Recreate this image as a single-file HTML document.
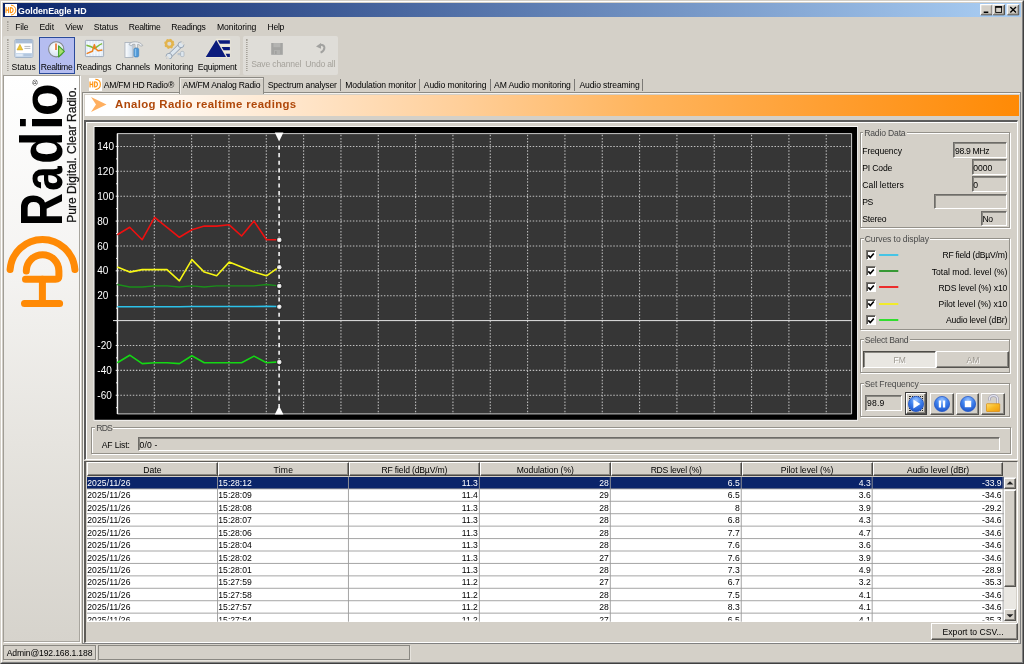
<!DOCTYPE html>
<html><head><meta charset="utf-8"><title>GoldenEagle HD</title>
<style>
*{box-sizing:border-box;margin:0;padding:0}
html,body{width:1024px;height:664px;overflow:hidden;background:#d4d0c8}
body{font-family:"Liberation Sans",sans-serif;font-size:8.6px;color:#000;position:relative}
#w{position:absolute;left:0;top:0;width:1024px;height:664px;will-change:transform}
.a{position:absolute}
.t{position:absolute;white-space:nowrap;line-height:13px;height:13px}
.cb{top:5px;width:12px;height:11px;background:#d4d0c8;border:1px solid;border-color:#fff #404040 #404040 #fff;box-shadow:inset -1px -1px 0 #808080}
.grip{width:2px;border-left:1px dotted #a09c94;border-right:1px dotted #b8b4ac;opacity:.9}
.grp{position:absolute;border:1px solid #94918a;box-shadow:1px 1px 0 #fff,inset 1px 1px 0 #fff}
.fld{position:absolute;border:1px solid;border-color:#6e6c68 #fff #fff #6e6c68;box-shadow:inset 1px 1px 0 #8a8882}
.btn{position:absolute;border:1px solid;border-color:#fff #55534f #55534f #fff;box-shadow:inset -1px -1px 0 #8a8882;background:#d4d0c8}
.chk{position:absolute;width:10px;height:10px;background:#fff;border:1px solid;border-color:#77746f #fff #fff #77746f;box-shadow:inset 1px 1px 0 #55534f}
</style></head><body>
<div id="w"><div class="a" style="left:0;top:0;width:1024px;height:664px;border:1px solid;border-color:#d4d0c8 #404040 #404040 #d4d0c8"></div>
<div class="a" style="left:1px;top:1px;width:1022px;height:662px;border:1px solid;border-color:#fff #808080 #808080 #fff"></div>
<div class="a" style="left:3px;top:3px;width:1018px;height:14px;background:linear-gradient(90deg,#0a246a 0%,#a6caf0 97%,#a6caf0 100%)"></div>
<div class="a" style="left:5px;top:4px;width:12px;height:12px;background:#fff"></div>
<svg class="a" style="left:5px;top:4px" width="12" height="12" viewBox="0 0 12 12"><g fill="none" stroke="#ff9410" stroke-linecap="round"><path d="M1 3.6V8.6M1 6.1H3.6M3.6 3.6V8.6" stroke-width="1.1"/><path d="M5.4 3.6V8.6M5.4 3.6C9 3.4 9 8.8 5.4 8.6" stroke-width="1.1"/><path d="M6.4 1.2C12.4 1.6 12.4 10.6 6.4 11" stroke-width="1"/></g></svg>
<div class="t" style="top:4.65px;font-size:8.8px;letter-spacing:-0.037px;left:18.10px;color:#fff;font-weight:bold;">GoldenEagle HD</div>
<svg class="a" style="left:978px;top:3px" width="44" height="14" viewBox="978 3 44 14">
<g transform="translate(0 0)"><rect x="980.7" y="4.7" width="11.7" height="10.3" fill="#d4d0c8"/><path d="M980.7 15V4.7H992.4" fill="none" stroke="#fff" stroke-width="1.2"/><path d="M992.2 4.9V14.8H980.9" fill="none" stroke="#4a4844" stroke-width="1"/><path d="M991.3 5.8V13.9H981.8" fill="none" stroke="#8a8882" stroke-width="0.8"/></g><g transform="translate(12.2 0)"><rect x="980.7" y="4.7" width="11.7" height="10.3" fill="#d4d0c8"/><path d="M980.7 15V4.7H992.4" fill="none" stroke="#fff" stroke-width="1.2"/><path d="M992.2 4.9V14.8H980.9" fill="none" stroke="#4a4844" stroke-width="1"/><path d="M991.3 5.8V13.9H981.8" fill="none" stroke="#8a8882" stroke-width="0.8"/></g><g transform="translate(26.5 0)"><rect x="980.7" y="4.7" width="11.7" height="10.3" fill="#d4d0c8"/><path d="M980.7 15V4.7H992.4" fill="none" stroke="#fff" stroke-width="1.2"/><path d="M992.2 4.9V14.8H980.9" fill="none" stroke="#4a4844" stroke-width="1"/><path d="M991.3 5.8V13.9H981.8" fill="none" stroke="#8a8882" stroke-width="0.8"/></g>
<rect x="983.7" y="11.5" width="4.6" height="1.5" fill="#000"/>
<rect x="995.7" y="7" width="5.9" height="5.4" fill="none" stroke="#000" stroke-width="0.9"/><rect x="995.2" y="6.1" width="6.9" height="1.5" fill="#000"/>
<path d="M1010.3 7L1016 12.5M1016 7L1010.3 12.5" stroke="#000" stroke-width="1.35" fill="none"/>
</svg>
<div class="a grip" style="left:7px;top:21px;height:10px"></div>
<div class="t" style="top:21.22px;font-size:8.6px;letter-spacing:-0.190px;left:15.30px;">File</div>
<div class="t" style="top:21.22px;font-size:8.6px;letter-spacing:-0.053px;left:39.45px;">Edit</div>
<div class="t" style="top:21.22px;font-size:8.6px;letter-spacing:-0.246px;left:65.30px;">View</div>
<div class="t" style="top:21.22px;font-size:8.6px;letter-spacing:-0.004px;left:93.70px;">Status</div>
<div class="t" style="top:21.22px;font-size:8.6px;letter-spacing:-0.259px;left:128.70px;">Realtime</div>
<div class="t" style="top:21.22px;font-size:8.6px;letter-spacing:-0.245px;left:171.20px;">Readings</div>
<div class="t" style="top:21.22px;font-size:8.6px;letter-spacing:-0.077px;left:216.95px;">Monitoring</div>
<div class="t" style="top:21.22px;font-size:8.6px;letter-spacing:-0.309px;left:267.60px;">Help</div>
<div class="a" style="left:3px;top:36px;width:237px;height:39px;background:#dddbd5;border-radius:2px"></div>
<div class="a" style="left:243px;top:36px;width:95px;height:39px;background:#dfddd8;border-radius:2px"></div>
<div class="a grip" style="left:7px;top:39px;height:32px"></div>
<div class="a grip" style="left:246px;top:39px;height:32px"></div>
<div class="a" style="left:39px;top:37px;width:36px;height:37px;background:#b5bdf0;border:1px solid #2a4a9a"></div>
<div class="t" style="top:61.12px;font-size:8.6px;letter-spacing:-0.012px;left:11.60px;">Status</div>
<div class="t" style="top:61.12px;font-size:8.6px;letter-spacing:-0.259px;left:40.70px;">Realtime</div>
<div class="t" style="top:61.12px;font-size:8.6px;letter-spacing:-0.202px;left:76.60px;">Readings</div>
<div class="t" style="top:61.12px;font-size:8.6px;letter-spacing:-0.245px;left:115.45px;">Channels</div>
<div class="t" style="top:61.12px;font-size:8.6px;letter-spacing:-0.102px;left:154.20px;">Monitoring</div>
<div class="t" style="top:61.12px;font-size:8.6px;letter-spacing:-0.233px;left:197.70px;">Equipment</div>
<div class="t" style="top:57.62px;font-size:8.6px;letter-spacing:-0.166px;left:251.20px;color:#a5a29b;">Save channel</div>
<div class="t" style="top:57.62px;font-size:8.6px;letter-spacing:-0.191px;left:305.30px;color:#a5a29b;">Undo all</div>
<div class="a" style="left:3px;top:75px;width:77px;height:567px;border:1px solid;border-color:#a09d96 #a8a59e #a8a59e #a09d96;box-shadow:1px 1px 0 #fff;background:linear-gradient(180deg,#fff 0%,#f4f3f1 35%,#e6e4df 65%,#d6d3cc 100%)"></div>
<svg class="a" style="left:4px;top:76px" width="76" height="240" viewBox="4 76 76 240">
<g fill="none" stroke="#ff8a05" stroke-width="7" stroke-linecap="round">
<path d="M10.1 269.5A32.5 32.5 0 0 1 74.9 269.5"/>
<path d="M26.3 271A16.3 16.3 0 0 1 58.9 271V276Q58.9 279.3 55.5 279.3H25.5"/>
<path d="M42.4 279.3V303.4M24.5 303.4H59.6"/>
</g>
<text transform="translate(62.40 226.06) rotate(-90) scale(0.9140 1.1840)" font-family="Liberation Sans, sans-serif" font-weight="bold" font-size="50" fill="#000">R</text>
<text transform="translate(62.10 190.80) rotate(-90) scale(0.8780 1.1140)" font-family="Liberation Sans, sans-serif" font-weight="bold" font-size="50" fill="#000">a</text>
<text transform="translate(62.10 164.00) rotate(-90) scale(1.0600 1.1980)" font-family="Liberation Sans, sans-serif" font-weight="bold" font-size="50" fill="#000">d</text>
<text transform="translate(62.40 129.90) rotate(-90) scale(1.0640 1.1400)" font-family="Liberation Sans, sans-serif" font-weight="bold" font-size="50" fill="#000">i</text>
<text transform="translate(62.10 116.00) rotate(-90) scale(1.0660 1.1140)" font-family="Liberation Sans, sans-serif" font-weight="bold" font-size="50" fill="#000">o</text>
<text transform="translate(75.8 222.8) rotate(-90)" font-family="Liberation Sans, sans-serif" font-size="12.6" textLength="135.6" lengthAdjust="spacingAndGlyphs" fill="#111" stroke="#111" stroke-width="0.25">Pure Digital. Clear Radio.</text>
<text transform="translate(37.8 85.6) rotate(-90)" font-family="Liberation Sans, sans-serif" font-size="8" fill="#222">&#174;</text>
</svg>
<div class="a" style="left:3px;top:645px;width:93px;height:15px;border:1px solid #8a8882;box-shadow:1px 1px 0 #e6e3dd"></div>
<div class="a" style="left:98px;top:645px;width:312px;height:15px;border:1px solid #8a8882;box-shadow:1px 1px 0 #e6e3dd"></div>
<div class="t" style="top:647.42px;font-size:8.6px;letter-spacing:-0.129px;left:6.70px;">Admin@192.168.1.188</div>
<div class="a" style="left:82px;top:92px;width:939px;height:552px;border:1px solid;border-color:#8c8a84 #808080 #808080 #8c8a84;box-shadow:inset 1px 1px 0 #f4f2ee"></div>
<div class="a" style="left:179px;top:77px;width:85px;height:17px;background:#d4d0c8;border:1px solid #8c8a84;border-bottom:none;box-shadow:inset 1px 1px 0 #ece9e4"></div>
<div class="a" style="left:89px;top:78px;width:12.5px;height:12.5px;background:#fff"></div>
<svg class="a" style="left:89px;top:78px" width="12.5" height="12.5" viewBox="0 0 12 12"><g fill="none" stroke="#ff9410" stroke-linecap="round"><path d="M1 3.6V8.6M1 6.1H3.6M3.6 3.6V8.6" stroke-width="1.1"/><path d="M5.4 3.6V8.6M5.4 3.6C9 3.4 9 8.8 5.4 8.6" stroke-width="1.1"/><path d="M6.4 1.2C12.4 1.6 12.4 10.6 6.4 11" stroke-width="1"/></g></svg>
<div class="t" style="top:78.82px;font-size:8.6px;letter-spacing:-0.221px;left:103.70px;">AM/FM HD Radio&#174;</div>
<div class="t" style="top:78.82px;font-size:8.6px;letter-spacing:-0.206px;left:182.80px;">AM/FM Analog Radio</div>
<div class="t" style="top:78.82px;font-size:8.6px;letter-spacing:-0.156px;left:267.80px;">Spectrum analyser</div>
<div class="t" style="top:78.82px;font-size:8.6px;letter-spacing:-0.139px;left:345.30px;">Modulation monitor</div>
<div class="t" style="top:78.82px;font-size:8.6px;letter-spacing:-0.125px;left:423.80px;">Audio monitoring</div>
<div class="t" style="top:78.82px;font-size:8.6px;letter-spacing:-0.142px;left:494.10px;">AM Audio monitoring</div>
<div class="t" style="top:78.82px;font-size:8.6px;letter-spacing:-0.124px;left:579.45px;">Audio streaming</div>
<div class="a" style="left:340px;top:78.5px;width:1px;height:12.5px;background:#7c7a76"></div>
<div class="a" style="left:419px;top:78.5px;width:1px;height:12.5px;background:#7c7a76"></div>
<div class="a" style="left:489.5px;top:78.5px;width:1px;height:12.5px;background:#7c7a76"></div>
<div class="a" style="left:574px;top:78.5px;width:1px;height:12.5px;background:#7c7a76"></div>
<div class="a" style="left:642px;top:78.5px;width:1px;height:12.5px;background:#7c7a76"></div>
<div class="a" style="left:85px;top:95px;width:934px;height:21px;background:linear-gradient(90deg,#fff 0%,#fff 4%,#ffe9d2 20%,#ffcf9a 40%,#ffb45c 60%,#ff9e30 80%,#ff8a05 100%)"></div>
<svg class="a" style="left:91px;top:97px" width="16" height="16" viewBox="0 0 16 16"><path d="M0 0L15.5 7.5L0 15L5 7.5Z" fill="#ffaf5f"/></svg>
<div class="t" style="top:97.85px;font-size:11.4px;letter-spacing:0.350px;left:115.10px;color:#b0480a;font-weight:bold;">Analog Radio realtime readings</div>
<div class="a" style="left:84px;top:120px;width:934px;height:340px;border:2px solid;border-color:#5c5c5c #fff #fff #5c5c5c;border-right-width:1px;border-bottom-width:1px;box-shadow:inset 1px 1px 0 #fff"></div>
<svg class="a" style="left:93px;top:126px" width="766" height="296" viewBox="93 126 766 296"><rect x="93.6" y="126.2" width="764.4" height="294.4" fill="#fff"/><rect x="94.5" y="127" width="762.6" height="292.8" fill="#000"/><rect x="117.3" y="133.6" width="734.3000000000001" height="280.29999999999995" fill="#363636"/><path d="M154.30 134.8V413.9M191.63 134.8V413.9M228.96 134.8V413.9M266.29 134.8V413.9M303.62 134.8V413.9M340.95 134.8V413.9M378.28 134.8V413.9M415.61 134.8V413.9M452.94 134.8V413.9M490.27 134.8V413.9M527.60 134.8V413.9M564.93 134.8V413.9M602.26 134.8V413.9M639.59 134.8V413.9M676.92 134.8V413.9M714.25 134.8V413.9M751.58 134.8V413.9M788.91 134.8V413.9M826.24 134.8V413.9M117.3 395.24H850.6M117.3 370.36H850.6M117.3 345.48H850.6M117.3 295.72H850.6M117.3 270.84H850.6M117.3 245.96H850.6M117.3 221.08H850.6M117.3 196.20H850.6M117.3 171.32H850.6M117.3 146.44H850.6" stroke="#c0c0c0" stroke-width="1.05" stroke-dasharray="1.5 1.6" fill="none"/><path d="M117.3 133.6H851.6V413.9H117.3Z" stroke="#dcdcdc" stroke-width="0.9" fill="none"/><path d="M117.5 133.6V413.9" stroke="#f4f4f4" stroke-width="1.3" fill="none"/><path d="M116.0 407.68h1.6M115.7 395.24h2M116.0 382.80h1.6M115.7 370.36h2M116.0 357.92h1.6M115.7 345.48h2M116.0 333.04h1.6M115.7 320.60h2M116.0 308.16h1.6M115.7 295.72h2M116.0 283.28h1.6M115.7 270.84h2M116.0 258.40h1.6M115.7 245.96h2M116.0 233.52h1.6M115.7 221.08h2M116.0 208.64h1.6M115.7 196.20h2M116.0 183.76h1.6M115.7 171.32h2M116.0 158.88h1.6M115.7 146.44h2" stroke="#f0f0f0" stroke-width="1" fill="none"/><path d="M113 320.60H851.6" stroke="#e4e4e4" stroke-width="1" fill="none"/><text x="97.3" y="398.84" font-family="Liberation Sans, sans-serif" font-size="10" fill="#fff">-60</text><text x="97.3" y="373.96" font-family="Liberation Sans, sans-serif" font-size="10" fill="#fff">-40</text><text x="97.3" y="349.08" font-family="Liberation Sans, sans-serif" font-size="10" fill="#fff">-20</text><text x="97.3" y="299.32" font-family="Liberation Sans, sans-serif" font-size="10" fill="#fff">20</text><text x="97.3" y="274.44" font-family="Liberation Sans, sans-serif" font-size="10" fill="#fff">40</text><text x="97.3" y="249.56" font-family="Liberation Sans, sans-serif" font-size="10" fill="#fff">60</text><text x="97.3" y="224.68" font-family="Liberation Sans, sans-serif" font-size="10" fill="#fff">80</text><text x="97.3" y="199.80" font-family="Liberation Sans, sans-serif" font-size="10" fill="#fff">100</text><text x="97.3" y="174.92" font-family="Liberation Sans, sans-serif" font-size="10" fill="#fff">120</text><text x="97.3" y="150.04" font-family="Liberation Sans, sans-serif" font-size="10" fill="#fff">140</text><path d="M117.3 306.7L129.7 306.7L142.2 306.7L154.6 306.7L167.0 306.7L179.4 306.7L191.9 306.5L204.3 306.5L216.7 306.5L229.2 306.5L241.6 306.5L254.0 306.5L266.5 306.4L278.9 306.5" stroke="#2cc2ea" stroke-width="1.6" stroke-linejoin="round" fill="none"/><path d="M117.3 284.5L129.7 287.0L142.2 287.0L154.6 285.8L167.0 285.8L179.4 287.0L191.9 285.8L204.3 287.0L216.7 285.8L229.2 285.8L241.6 285.8L254.0 285.8L266.5 284.5L278.9 285.8" stroke="#1a8f1a" stroke-width="1.3" stroke-linejoin="round" fill="none"/><path d="M117.3 234.8L129.7 227.3L142.2 239.7L154.6 217.3L167.0 227.3L179.4 237.3L191.9 229.8L204.3 226.1L216.7 226.1L229.2 224.8L241.6 236.0L254.0 221.1L266.5 239.7L278.9 239.7" stroke="#ee1010" stroke-width="1.6" stroke-linejoin="round" fill="none"/><path d="M117.3 267.1L129.7 272.1L142.2 269.6L154.6 269.6L167.0 269.6L179.4 280.8L191.9 259.6L204.3 272.1L216.7 275.8L229.2 262.1L241.6 267.1L254.0 272.1L266.5 275.8L278.9 267.1" stroke="#f6f614" stroke-width="1.6" stroke-linejoin="round" fill="none"/><path d="M117.3 362.8L129.7 355.2L142.2 363.6L154.6 362.8L167.0 362.8L179.4 363.6L191.9 355.7L204.3 362.8L216.7 362.8L229.2 362.8L241.6 362.8L254.0 356.1L266.5 362.8L278.9 361.9" stroke="#14d814" stroke-width="1.6" stroke-linejoin="round" fill="none"/><path d="M279.1 145.5V406.9" stroke="#fff" stroke-width="1.5" stroke-dasharray="4.1 3.5" fill="none"/><path d="M274.8 132.6h8.6l-4.3 8.8z" fill="#fff"/><path d="M274.8 414.5h8.6l-4.3 -8.8z" fill="#fff"/><circle cx="279.3" cy="306.7" r="2.9" fill="#1c1c1c"/><circle cx="279.3" cy="306.7" r="2.3" fill="#dedede"/><circle cx="279.3" cy="306.7" r="1.1" fill="#fff"/><circle cx="279.3" cy="286.0" r="2.9" fill="#1c1c1c"/><circle cx="279.3" cy="286.0" r="2.3" fill="#dedede"/><circle cx="279.3" cy="286.0" r="1.1" fill="#fff"/><circle cx="279.3" cy="239.9" r="2.9" fill="#1c1c1c"/><circle cx="279.3" cy="239.9" r="2.3" fill="#dedede"/><circle cx="279.3" cy="239.9" r="1.1" fill="#fff"/><circle cx="279.3" cy="267.3" r="2.9" fill="#1c1c1c"/><circle cx="279.3" cy="267.3" r="2.3" fill="#dedede"/><circle cx="279.3" cy="267.3" r="1.1" fill="#fff"/><circle cx="279.3" cy="362.1" r="2.9" fill="#1c1c1c"/><circle cx="279.3" cy="362.1" r="2.3" fill="#dedede"/><circle cx="279.3" cy="362.1" r="1.1" fill="#fff"/></svg>
<div class="grp" style="left:860.0px;top:132.0px;width:150.0px;height:95.5px"></div>
<div class="a" style="left:863.0px;top:131.0px;width:43.7px;height:4px;background:#d4d0c8"></div>
<div class="t" style="top:127.32px;font-size:8.6px;letter-spacing:-0.170px;left:864.20px;color:#4a4a4a;">Radio Data</div>
<div class="t" style="top:144.52px;font-size:8.6px;letter-spacing:-0.112px;left:862.30px;">Frequency</div>
<div class="fld" style="left:953.0px;top:142.0px;width:54.3px;height:15.5px"></div>
<div class="t" style="top:144.52px;font-size:8.6px;letter-spacing:-0.323px;left:955.00px;">98.9 MHz</div>
<div class="t" style="top:161.72px;font-size:8.6px;letter-spacing:-0.180px;left:862.30px;">PI Code</div>
<div class="fld" style="left:971.5px;top:159.3px;width:35.8px;height:15.5px"></div>
<div class="t" style="top:161.72px;font-size:8.6px;letter-spacing:-0.056px;left:973.30px;">0000</div>
<div class="t" style="top:178.92px;font-size:8.6px;letter-spacing:0.076px;left:862.30px;">Call letters</div>
<div class="fld" style="left:971.5px;top:176.4px;width:35.8px;height:15.5px"></div>
<div class="t" style="top:178.92px;font-size:8.6px;letter-spacing:0.219px;left:973.30px;">0</div>
<div class="t" style="top:196.12px;font-size:8.6px;letter-spacing:-0.634px;left:862.30px;">PS</div>
<div class="fld" style="left:934.3px;top:193.5px;width:73.0px;height:15.5px"></div>
<div class="t" style="top:213.32px;font-size:8.6px;letter-spacing:-0.221px;left:862.30px;">Stereo</div>
<div class="fld" style="left:980.5px;top:210.6px;width:26.8px;height:15.5px"></div>
<div class="t" style="top:213.32px;font-size:8.6px;letter-spacing:-0.500px;left:982.60px;">No</div>
<div class="grp" style="left:860.0px;top:237.5px;width:150.0px;height:92.8px"></div>
<div class="a" style="left:863.5px;top:236.5px;width:66.6px;height:4px;background:#d4d0c8"></div>
<div class="t" style="top:232.62px;font-size:8.6px;letter-spacing:-0.101px;left:864.70px;color:#4a4a4a;">Curves to display</div>
<div class="chk" style="left:866px;top:249.9px"></div>
<svg class="a" style="left:867px;top:251.7px" width="8" height="8" viewBox="0 0 8 8"><path d="M1.3 3.4L3.3 5.6L6.8 1.5" stroke="#000" stroke-width="1.6" fill="none"/></svg>
<svg class="a" style="left:878px;top:251.9px" width="22" height="6" viewBox="0 0 22 6"><path d="M1.1 3H20.3" stroke="#2cc2ea" stroke-width="1.7"/></svg>
<div class="t" style="top:249.42px;font-size:8.6px;letter-spacing:-0.210px;left:942.40px;">RF field (dB&#181;V/m)</div>
<div class="chk" style="left:866px;top:266.1px"></div>
<svg class="a" style="left:867px;top:267.9px" width="8" height="8" viewBox="0 0 8 8"><path d="M1.3 3.4L3.3 5.6L6.8 1.5" stroke="#000" stroke-width="1.6" fill="none"/></svg>
<svg class="a" style="left:878px;top:268.1px" width="22" height="6" viewBox="0 0 22 6"><path d="M1.1 3H20.3" stroke="#1a8f1a" stroke-width="1.7"/></svg>
<div class="t" style="top:265.67px;font-size:8.6px;letter-spacing:0.007px;left:931.70px;">Total mod. level (%)</div>
<div class="chk" style="left:866px;top:282.4px"></div>
<svg class="a" style="left:867px;top:284.2px" width="8" height="8" viewBox="0 0 8 8"><path d="M1.3 3.4L3.3 5.6L6.8 1.5" stroke="#000" stroke-width="1.6" fill="none"/></svg>
<svg class="a" style="left:878px;top:284.4px" width="22" height="6" viewBox="0 0 22 6"><path d="M1.1 3H20.3" stroke="#f01010" stroke-width="1.7"/></svg>
<div class="t" style="top:281.92px;font-size:8.6px;letter-spacing:-0.083px;left:938.50px;">RDS level (%) x10</div>
<div class="chk" style="left:866px;top:298.6px"></div>
<svg class="a" style="left:867px;top:300.4px" width="8" height="8" viewBox="0 0 8 8"><path d="M1.3 3.4L3.3 5.6L6.8 1.5" stroke="#000" stroke-width="1.6" fill="none"/></svg>
<svg class="a" style="left:878px;top:300.6px" width="22" height="6" viewBox="0 0 22 6"><path d="M1.1 3H20.3" stroke="#f6f010" stroke-width="1.7"/></svg>
<div class="t" style="top:298.17px;font-size:8.6px;letter-spacing:0.001px;left:938.50px;">Pilot level (%) x10</div>
<div class="chk" style="left:866px;top:314.9px"></div>
<svg class="a" style="left:867px;top:316.7px" width="8" height="8" viewBox="0 0 8 8"><path d="M1.3 3.4L3.3 5.6L6.8 1.5" stroke="#000" stroke-width="1.6" fill="none"/></svg>
<svg class="a" style="left:878px;top:316.9px" width="22" height="6" viewBox="0 0 22 6"><path d="M1.1 3H20.3" stroke="#14e014" stroke-width="1.7"/></svg>
<div class="t" style="top:314.42px;font-size:8.6px;letter-spacing:-0.131px;left:946.00px;">Audio level (dBr)</div>
<div class="grp" style="left:860.0px;top:339.0px;width:150.0px;height:34.0px"></div>
<div class="a" style="left:863.5px;top:338.0px;width:46.1px;height:4px;background:#d4d0c8"></div>
<div class="t" style="top:334.12px;font-size:8.6px;letter-spacing:-0.240px;left:864.70px;color:#4a4a4a;">Select Band</div>
<div class="a" style="left:863px;top:351.4px;width:72.5px;height:16.8px;background:#e9e7e2;border:1px solid;border-color:#4e4c48 #fff #fff #4e4c48;box-shadow:inset 1px 1px 0 #8a8882"></div>
<div class="btn" style="left:935.5px;top:351.4px;width:73px;height:16.8px"></div>
<div class="t" style="top:354.02px;font-size:8.6px;letter-spacing:0.000px;left:893.50px;color:#9c9890;text-shadow:0.8px 0.8px 0 #fff;">FM</div>
<div class="t" style="top:354.02px;font-size:8.6px;letter-spacing:0.000px;left:966.50px;color:#9c9890;text-shadow:0.8px 0.8px 0 #fff;">AM</div>
<div class="grp" style="left:860.0px;top:382.6px;width:150.0px;height:34.0px"></div>
<div class="a" style="left:863.5px;top:381.6px;width:56.3px;height:4px;background:#d4d0c8"></div>
<div class="t" style="top:377.52px;font-size:8.6px;letter-spacing:-0.153px;left:864.70px;color:#4a4a4a;">Set Frequency</div>
<div class="fld" style="left:865.4px;top:394.5px;width:36.4px;height:16.4px"></div>
<div class="t" style="top:397.12px;font-size:8.6px;letter-spacing:0.116px;left:867.10px;">98.9</div>
<div class="a" style="left:905.2px;top:391.5px;width:22.0px;height:23.6px;border:1px solid #3c3c3c"></div>
<div class="btn" style="left:906.2px;top:392.5px;width:20.0px;height:21.6px"></div>
<div class="a" style="left:909.2px;top:395.5px;width:14.0px;height:15.6px;border:1px dotted #222"></div>
<div class="btn" style="left:930.0px;top:392.5px;width:23.5px;height:22.2px"></div>
<div class="btn" style="left:956.0px;top:392.5px;width:23.2px;height:22.2px"></div>
<div class="btn" style="left:981.4px;top:392.5px;width:23.4px;height:22.2px"></div>
<svg class="a" style="left:907.3px;top:394.8px" width="18" height="18" viewBox="-9 -9 18 18"><defs><radialGradient id="bg916" cx="0.5" cy="0.25" r="0.8"><stop offset="0" stop-color="#9cc4ff"/><stop offset="0.45" stop-color="#3f82ee"/><stop offset="1" stop-color="#1a4fc4"/></radialGradient></defs><circle r="7.6" fill="url(#bg916)" stroke="#2a5cc8" stroke-width="0.8"/><path d="M-2.6 -4.4L4.4 0L-2.6 4.4Z" fill="#fff"/></svg>
<svg class="a" style="left:932.8px;top:394.8px" width="18" height="18" viewBox="-9 -9 18 18"><defs><radialGradient id="bg941" cx="0.5" cy="0.25" r="0.8"><stop offset="0" stop-color="#9cc4ff"/><stop offset="0.45" stop-color="#3f82ee"/><stop offset="1" stop-color="#1a4fc4"/></radialGradient></defs><circle r="7.6" fill="url(#bg941)" stroke="#2a5cc8" stroke-width="0.8"/><path d="M-3.2 -3.6h2.3v7.2h-2.3zM0.9 -3.6h2.3v7.2h-2.3z" fill="#fff"/></svg>
<svg class="a" style="left:958.5px;top:394.8px" width="18" height="18" viewBox="-9 -9 18 18"><defs><radialGradient id="bg967" cx="0.5" cy="0.25" r="0.8"><stop offset="0" stop-color="#9cc4ff"/><stop offset="0.45" stop-color="#3f82ee"/><stop offset="1" stop-color="#1a4fc4"/></radialGradient></defs><circle r="7.6" fill="url(#bg967)" stroke="#2a5cc8" stroke-width="0.8"/><rect x="-3.2" y="-3.2" width="6.4" height="6.4" fill="#fff"/></svg>
<svg class="a" style="left:985px;top:393px" width="17" height="20" viewBox="0 0 17 20"><defs><linearGradient id="lk" x1="0" y1="0" x2="1" y2="1"><stop offset="0" stop-color="#ffdf70"/><stop offset="0.5" stop-color="#f8b822"/><stop offset="1" stop-color="#f09a10"/></linearGradient></defs><path d="M4.4 7.6V6.4C4.4 1.4 12.6 1.4 12.6 6.4V10.8" fill="none" stroke="#9a9aae" stroke-width="2.6"/><path d="M4.4 7.6V6.4C4.4 1.4 12.6 1.4 12.6 6.4V10.8" fill="none" stroke="#e4e4ee" stroke-width="1.3"/><rect x="1.5" y="10.7" width="13.2" height="7.8" rx="0.6" fill="url(#lk)" stroke="#d88a0a" stroke-width="0.7"/></svg>
<div class="grp" style="left:91.3px;top:427.0px;width:919.7px;height:27.0px"></div>
<div class="a" style="left:95.1px;top:426.0px;width:18.0px;height:4px;background:#d4d0c8"></div>
<div class="t" style="top:421.82px;font-size:8.6px;letter-spacing:-0.800px;left:96.30px;color:#4a4a4a;">RDS</div>
<div class="t" style="top:439.02px;font-size:8.6px;letter-spacing:-0.130px;left:101.70px;">AF List:</div>
<div class="fld" style="left:138px;top:436.5px;width:862.4px;height:14.8px"></div>
<div class="t" style="top:439.02px;font-size:8.6px;letter-spacing:0.179px;left:139.50px;">0/0 -</div>
<div class="a" style="left:84px;top:461px;width:934px;height:181.5px;border:1px solid;border-color:#5e5c58 #fff #fff #5e5c58;border-left-width:2px"></div>
<div class="a" style="left:87px;top:476.5px;width:916.8px;height:145.2px;background:#fff"></div>
<div class="a" style="left:87.0px;top:462.3px;width:130.9px;height:14px;background:#d4d0c8;border:1px solid;border-color:#fff #4a4844 #4a4844 #fff;box-shadow:inset -1px -1px 0 #8a8882"></div>
<div class="a" style="left:217.9px;top:462.3px;width:130.9px;height:14px;background:#d4d0c8;border:1px solid;border-color:#fff #4a4844 #4a4844 #fff;box-shadow:inset -1px -1px 0 #8a8882"></div>
<div class="a" style="left:348.9px;top:462.3px;width:130.9px;height:14px;background:#d4d0c8;border:1px solid;border-color:#fff #4a4844 #4a4844 #fff;box-shadow:inset -1px -1px 0 #8a8882"></div>
<div class="a" style="left:479.8px;top:462.3px;width:130.9px;height:14px;background:#d4d0c8;border:1px solid;border-color:#fff #4a4844 #4a4844 #fff;box-shadow:inset -1px -1px 0 #8a8882"></div>
<div class="a" style="left:610.7px;top:462.3px;width:130.9px;height:14px;background:#d4d0c8;border:1px solid;border-color:#fff #4a4844 #4a4844 #fff;box-shadow:inset -1px -1px 0 #8a8882"></div>
<div class="a" style="left:741.7px;top:462.3px;width:130.9px;height:14px;background:#d4d0c8;border:1px solid;border-color:#fff #4a4844 #4a4844 #fff;box-shadow:inset -1px -1px 0 #8a8882"></div>
<div class="a" style="left:872.6px;top:462.3px;width:130.9px;height:14px;background:#d4d0c8;border:1px solid;border-color:#fff #4a4844 #4a4844 #fff;box-shadow:inset -1px -1px 0 #8a8882"></div>
<div class="t" style="top:463.92px;font-size:8.6px;letter-spacing:0.111px;left:143.16px;">Date</div>
<div class="t" style="top:463.92px;font-size:8.6px;letter-spacing:0.205px;left:273.59px;">Time</div>
<div class="t" style="top:463.92px;font-size:8.6px;letter-spacing:-0.169px;left:381.53px;">RF field (dB&#181;V/m)</div>
<div class="t" style="top:463.92px;font-size:8.6px;letter-spacing:-0.050px;left:516.71px;">Modulation (%)</div>
<div class="t" style="top:463.92px;font-size:8.6px;letter-spacing:-0.221px;left:650.64px;">RDS level (%)</div>
<div class="t" style="top:463.92px;font-size:8.6px;letter-spacing:0.004px;left:780.82px;">Pilot level (%)</div>
<div class="t" style="top:463.92px;font-size:8.6px;letter-spacing:-0.084px;left:907.00px;">Audio level (dBr)</div>
<div class="a" style="left:87px;top:476.6px;width:916.8px;height:12.2px;background:#0a246a"></div>
<svg class="a" style="left:86px;top:476px" width="919" height="146" viewBox="86 476 919 146"><path d="M87 488.85H1003.8M87 501.28H1003.8M87 513.71H1003.8M87 526.14H1003.8M87 538.57H1003.8M87 551.00H1003.8M87 563.43H1003.8M87 575.86H1003.8M87 588.29H1003.8M87 600.72H1003.8M87 613.15H1003.8M87 625.58H1003.8M217.53 476.5V621.7M348.46 476.5V621.7M479.39 476.5V621.7M610.32 476.5V621.7M741.25 476.5V621.7M872.18 476.5V621.7M1003.11 476.5V621.7" stroke="#9b9b9b" stroke-width="0.9" fill="none"/></svg>
<div class="t" style="top:476.92px;font-size:8.6px;letter-spacing:0.102px;left:87.20px;color:#fff;">2025/11/26</div>
<div class="t" style="top:476.92px;font-size:8.6px;letter-spacing:0.000px;left:218.33px;color:#fff;">15:28:12</div>
<div class="t" style="top:476.92px;font-size:8.6px;letter-spacing:0.000px;left:461.80px;color:#fff;">11.3</div>
<div class="t" style="top:476.92px;font-size:8.6px;letter-spacing:0.000px;left:599.26px;color:#fff;">28</div>
<div class="t" style="top:476.92px;font-size:8.6px;letter-spacing:0.000px;left:727.80px;color:#fff;">6.5</div>
<div class="t" style="top:476.92px;font-size:8.6px;letter-spacing:0.000px;left:858.73px;color:#fff;">4.3</div>
<div class="t" style="top:476.92px;font-size:8.6px;letter-spacing:0.000px;left:982.02px;color:#fff;">-33.9</div>
<div class="t" style="top:489.35px;font-size:8.6px;letter-spacing:0.102px;left:87.20px;">2025/11/26</div>
<div class="t" style="top:489.35px;font-size:8.6px;letter-spacing:0.000px;left:218.33px;">15:28:09</div>
<div class="t" style="top:489.35px;font-size:8.6px;letter-spacing:0.000px;left:461.80px;">11.4</div>
<div class="t" style="top:489.35px;font-size:8.6px;letter-spacing:0.000px;left:599.26px;">29</div>
<div class="t" style="top:489.35px;font-size:8.6px;letter-spacing:0.000px;left:727.80px;">6.5</div>
<div class="t" style="top:489.35px;font-size:8.6px;letter-spacing:0.000px;left:858.73px;">3.6</div>
<div class="t" style="top:489.35px;font-size:8.6px;letter-spacing:0.000px;left:982.02px;">-34.6</div>
<div class="t" style="top:501.78px;font-size:8.6px;letter-spacing:0.102px;left:87.20px;">2025/11/26</div>
<div class="t" style="top:501.78px;font-size:8.6px;letter-spacing:0.000px;left:218.33px;">15:28:08</div>
<div class="t" style="top:501.78px;font-size:8.6px;letter-spacing:0.000px;left:461.80px;">11.3</div>
<div class="t" style="top:501.78px;font-size:8.6px;letter-spacing:0.000px;left:599.26px;">28</div>
<div class="t" style="top:501.78px;font-size:8.6px;letter-spacing:0.000px;left:734.97px;">8</div>
<div class="t" style="top:501.78px;font-size:8.6px;letter-spacing:0.000px;left:858.73px;">3.9</div>
<div class="t" style="top:501.78px;font-size:8.6px;letter-spacing:0.000px;left:982.02px;">-29.2</div>
<div class="t" style="top:514.21px;font-size:8.6px;letter-spacing:0.102px;left:87.20px;">2025/11/26</div>
<div class="t" style="top:514.21px;font-size:8.6px;letter-spacing:0.000px;left:218.33px;">15:28:07</div>
<div class="t" style="top:514.21px;font-size:8.6px;letter-spacing:0.000px;left:461.80px;">11.3</div>
<div class="t" style="top:514.21px;font-size:8.6px;letter-spacing:0.000px;left:599.26px;">28</div>
<div class="t" style="top:514.21px;font-size:8.6px;letter-spacing:0.000px;left:727.80px;">6.8</div>
<div class="t" style="top:514.21px;font-size:8.6px;letter-spacing:0.000px;left:858.73px;">4.3</div>
<div class="t" style="top:514.21px;font-size:8.6px;letter-spacing:0.000px;left:982.02px;">-34.6</div>
<div class="t" style="top:526.64px;font-size:8.6px;letter-spacing:0.102px;left:87.20px;">2025/11/26</div>
<div class="t" style="top:526.64px;font-size:8.6px;letter-spacing:0.000px;left:218.33px;">15:28:06</div>
<div class="t" style="top:526.64px;font-size:8.6px;letter-spacing:0.000px;left:461.80px;">11.3</div>
<div class="t" style="top:526.64px;font-size:8.6px;letter-spacing:0.000px;left:599.26px;">28</div>
<div class="t" style="top:526.64px;font-size:8.6px;letter-spacing:0.000px;left:727.80px;">7.7</div>
<div class="t" style="top:526.64px;font-size:8.6px;letter-spacing:0.000px;left:858.73px;">4.7</div>
<div class="t" style="top:526.64px;font-size:8.6px;letter-spacing:0.000px;left:982.02px;">-34.6</div>
<div class="t" style="top:539.07px;font-size:8.6px;letter-spacing:0.102px;left:87.20px;">2025/11/26</div>
<div class="t" style="top:539.07px;font-size:8.6px;letter-spacing:0.000px;left:218.33px;">15:28:04</div>
<div class="t" style="top:539.07px;font-size:8.6px;letter-spacing:0.000px;left:461.80px;">11.3</div>
<div class="t" style="top:539.07px;font-size:8.6px;letter-spacing:0.000px;left:599.26px;">28</div>
<div class="t" style="top:539.07px;font-size:8.6px;letter-spacing:0.000px;left:727.80px;">7.6</div>
<div class="t" style="top:539.07px;font-size:8.6px;letter-spacing:0.000px;left:858.73px;">3.6</div>
<div class="t" style="top:539.07px;font-size:8.6px;letter-spacing:0.000px;left:982.02px;">-34.6</div>
<div class="t" style="top:551.50px;font-size:8.6px;letter-spacing:0.102px;left:87.20px;">2025/11/26</div>
<div class="t" style="top:551.50px;font-size:8.6px;letter-spacing:0.000px;left:218.33px;">15:28:02</div>
<div class="t" style="top:551.50px;font-size:8.6px;letter-spacing:0.000px;left:461.80px;">11.3</div>
<div class="t" style="top:551.50px;font-size:8.6px;letter-spacing:0.000px;left:599.26px;">27</div>
<div class="t" style="top:551.50px;font-size:8.6px;letter-spacing:0.000px;left:727.80px;">7.6</div>
<div class="t" style="top:551.50px;font-size:8.6px;letter-spacing:0.000px;left:858.73px;">3.9</div>
<div class="t" style="top:551.50px;font-size:8.6px;letter-spacing:0.000px;left:982.02px;">-34.6</div>
<div class="t" style="top:563.93px;font-size:8.6px;letter-spacing:0.102px;left:87.20px;">2025/11/26</div>
<div class="t" style="top:563.93px;font-size:8.6px;letter-spacing:0.000px;left:218.33px;">15:28:01</div>
<div class="t" style="top:563.93px;font-size:8.6px;letter-spacing:0.000px;left:461.80px;">11.3</div>
<div class="t" style="top:563.93px;font-size:8.6px;letter-spacing:0.000px;left:599.26px;">28</div>
<div class="t" style="top:563.93px;font-size:8.6px;letter-spacing:0.000px;left:727.80px;">7.3</div>
<div class="t" style="top:563.93px;font-size:8.6px;letter-spacing:0.000px;left:858.73px;">4.9</div>
<div class="t" style="top:563.93px;font-size:8.6px;letter-spacing:0.000px;left:982.02px;">-28.9</div>
<div class="t" style="top:576.36px;font-size:8.6px;letter-spacing:0.102px;left:87.20px;">2025/11/26</div>
<div class="t" style="top:576.36px;font-size:8.6px;letter-spacing:0.000px;left:218.33px;">15:27:59</div>
<div class="t" style="top:576.36px;font-size:8.6px;letter-spacing:0.000px;left:461.80px;">11.2</div>
<div class="t" style="top:576.36px;font-size:8.6px;letter-spacing:0.000px;left:599.26px;">27</div>
<div class="t" style="top:576.36px;font-size:8.6px;letter-spacing:0.000px;left:727.80px;">6.7</div>
<div class="t" style="top:576.36px;font-size:8.6px;letter-spacing:0.000px;left:858.73px;">3.2</div>
<div class="t" style="top:576.36px;font-size:8.6px;letter-spacing:0.000px;left:982.02px;">-35.3</div>
<div class="t" style="top:588.79px;font-size:8.6px;letter-spacing:0.102px;left:87.20px;">2025/11/26</div>
<div class="t" style="top:588.79px;font-size:8.6px;letter-spacing:0.000px;left:218.33px;">15:27:58</div>
<div class="t" style="top:588.79px;font-size:8.6px;letter-spacing:0.000px;left:461.80px;">11.2</div>
<div class="t" style="top:588.79px;font-size:8.6px;letter-spacing:0.000px;left:599.26px;">28</div>
<div class="t" style="top:588.79px;font-size:8.6px;letter-spacing:0.000px;left:727.80px;">7.5</div>
<div class="t" style="top:588.79px;font-size:8.6px;letter-spacing:0.000px;left:858.73px;">4.1</div>
<div class="t" style="top:588.79px;font-size:8.6px;letter-spacing:0.000px;left:982.02px;">-34.6</div>
<div class="t" style="top:601.22px;font-size:8.6px;letter-spacing:0.102px;left:87.20px;">2025/11/26</div>
<div class="t" style="top:601.22px;font-size:8.6px;letter-spacing:0.000px;left:218.33px;">15:27:57</div>
<div class="t" style="top:601.22px;font-size:8.6px;letter-spacing:0.000px;left:461.80px;">11.2</div>
<div class="t" style="top:601.22px;font-size:8.6px;letter-spacing:0.000px;left:599.26px;">28</div>
<div class="t" style="top:601.22px;font-size:8.6px;letter-spacing:0.000px;left:727.80px;">8.3</div>
<div class="t" style="top:601.22px;font-size:8.6px;letter-spacing:0.000px;left:858.73px;">4.1</div>
<div class="t" style="top:601.22px;font-size:8.6px;letter-spacing:0.000px;left:982.02px;">-34.6</div>
<div class="t" style="top:613.65px;font-size:8.6px;letter-spacing:0.102px;left:87.20px;clip-path:inset(0 0 6.1px 0);">2025/11/26</div>
<div class="t" style="top:613.65px;font-size:8.6px;letter-spacing:0.000px;left:218.33px;clip-path:inset(0 0 6.1px 0);">15:27:54</div>
<div class="t" style="top:613.65px;font-size:8.6px;letter-spacing:0.000px;left:461.80px;clip-path:inset(0 0 6.1px 0);">11.2</div>
<div class="t" style="top:613.65px;font-size:8.6px;letter-spacing:0.000px;left:599.26px;clip-path:inset(0 0 6.1px 0);">27</div>
<div class="t" style="top:613.65px;font-size:8.6px;letter-spacing:0.000px;left:727.80px;clip-path:inset(0 0 6.1px 0);">6.5</div>
<div class="t" style="top:613.65px;font-size:8.6px;letter-spacing:0.000px;left:858.73px;clip-path:inset(0 0 6.1px 0);">4.1</div>
<div class="t" style="top:613.65px;font-size:8.6px;letter-spacing:0.000px;left:982.02px;clip-path:inset(0 0 6.1px 0);">-35.3</div>
<div class="a" style="left:1003.8px;top:476.5px;width:12.4px;height:145.2px;background:#eae8e3"></div>
<div class="btn" style="left:1003.8px;top:477.5px;width:12.2px;height:11.4px"></div>
<div class="btn" style="left:1003.8px;top:489.5px;width:12.2px;height:97.6px"></div>
<div class="btn" style="left:1003.8px;top:609.4px;width:12.2px;height:12px"></div>
<svg class="a" style="left:1006px;top:480px" width="8" height="6" viewBox="0 0 8 6"><path d="M0.6 4.6L4 1.2L7.4 4.6Z" fill="#222"/></svg>
<svg class="a" style="left:1006px;top:612.6px" width="8" height="6" viewBox="0 0 8 6"><path d="M0.6 1.2L4 4.6L7.4 1.2Z" fill="#222"/></svg>
<div class="btn" style="left:930.5px;top:623px;width:87px;height:17.4px"></div>
<div class="t" style="top:626.22px;font-size:8.6px;letter-spacing:0.023px;left:942.50px;">Export to CSV...</div>
<svg class="a" style="left:14px;top:39px" width="20" height="20" viewBox="14 39 20 20">
<rect x="15" y="39.6" width="17.8" height="17.8" rx="1" fill="#fff" stroke="#8fa4bd" stroke-width="0.9"/>
<rect x="15.4" y="40" width="17" height="3.4" fill="#a9bdd6"/>
<rect x="15.4" y="53" width="17" height="4" fill="#c4d6ea"/>
<rect x="16.2" y="53.8" width="6.5" height="2.4" fill="#dfe9f5"/><rect x="23.6" y="53.8" width="8" height="2.4" fill="#b3c7de"/>
<path d="M19.9 44.4L22.8 49.9H17Z" fill="#f0c834" stroke="#c9a020" stroke-width="0.6"/>
<path d="M24.4 46.4h6M24.4 48.4h6" stroke="#b4b8be" stroke-width="1"/>
</svg>
<svg class="a" style="left:47px;top:40px" width="20" height="19" viewBox="47 40 20 19">
<defs><radialGradient id="ck" cx="0.4" cy="0.35" r="0.7"><stop offset="0" stop-color="#fff"/><stop offset="1" stop-color="#cfe0f0"/></radialGradient></defs>
<circle cx="56.2" cy="49.3" r="7.6" fill="url(#ck)" stroke="#84888c" stroke-width="1.1"/>
<path d="M56 43.6V50" stroke="#e8702a" stroke-width="1.6"/>
<path d="M58.6 45.8L64.4 51.4L58.6 57Z" fill="#a8e070" stroke="#3f9f2c" stroke-width="1.1" stroke-linejoin="round"/>
</svg>
<svg class="a" style="left:84px;top:39px" width="21" height="19" viewBox="84 39 21 19">
<rect x="85.4" y="40.4" width="18.2" height="16.2" rx="0.8" fill="#e4eef9" stroke="#9aa6b8" stroke-width="0.9"/>
<path d="M88.5 41V56M91.5 41V56M94.5 41V56M97.5 41V56M100.5 41V56M86 44H103M86 47H103M86 50H103M86 53H103" stroke="#f7fbff" stroke-width="0.7"/>
<path d="M86.4 45.2C90 46 92 46.5 94.6 48.6C97 47 99 44.6 102.2 43.6" fill="none" stroke="#7dbb3c" stroke-width="1.5"/>
<path d="M86.6 53.6L92.4 51.2L94.4 44.6L95.6 48.6L98 50.8L102.4 50" fill="none" stroke="#ee8122" stroke-width="1.5" stroke-linejoin="round"/>
</svg>
<svg class="a" style="left:123px;top:40px" width="22" height="19" viewBox="123 40 22 19">
<defs><linearGradient id="dc" x1="0" x2="1"><stop offset="0" stop-color="#fff"/><stop offset="1" stop-color="#c9d9ea"/></linearGradient></defs>
<rect x="125" y="42.4" width="8" height="15" fill="url(#dc)" stroke="#a3adb9" stroke-width="0.8"/>
<path d="M129 44.6C130 41 140 40.4 142.8 45.6L140.6 46.2C139.6 44.4 138.2 44.2 137.6 44.4V48H135V44.4C133.6 44 132 44.2 131.4 45.8Z" fill="#eef0f3" stroke="#9aa0a8" stroke-width="0.7"/>
<rect x="133.9" y="48.2" width="4.8" height="8.8" rx="1.4" fill="#4d97d6" stroke="#3a7fc0" stroke-width="0.6"/>
<rect x="134.8" y="49" width="1.4" height="7" fill="#8cc3ee"/>
</svg>
<svg class="a" style="left:163px;top:38px" width="24" height="21" viewBox="163 38 24 21">
<circle cx="169.3" cy="43.8" r="3.3" fill="none" stroke="#e2b44e" stroke-width="2.5"/>
<circle cx="169.3" cy="43.8" r="4.4" fill="none" stroke="#e2b44e" stroke-width="1.4" stroke-dasharray="1.7 1.75"/>
<path d="M169.2 56.2L180.6 45.2" stroke="#8d9bab" stroke-width="4.8" stroke-linecap="round"/>
<path d="M169.2 56.2L180.6 45.2" stroke="#dde6ee" stroke-width="3.4" stroke-linecap="round"/>
<circle cx="181" cy="44.8" r="2.9" fill="#dde6ee" stroke="#8d9bab" stroke-width="0.8"/>
<circle cx="169" cy="56.2" r="2.9" fill="#dde6ee" stroke="#8d9bab" stroke-width="0.8"/>
<path d="M181.6 42L184 44.4" stroke="#dddbd5" stroke-width="2"/><path d="M166.4 56.4L168.6 58.8" stroke="#dddbd5" stroke-width="2"/>
<rect x="177.6" y="53" width="3.4" height="2.2" fill="#b9c4cf"/><rect x="180.6" y="51.4" width="3.4" height="5.2" rx="1.2" fill="#dde6ee" stroke="#9aa8b6" stroke-width="0.6"/>
</svg>
<svg class="a" style="left:204px;top:38px" width="28" height="21" viewBox="204 38 28 21">
<path d="M216.2 38.8L204.6 57.8H230.3V38.8Z" fill="#f1ecdb" opacity="0.8"/>
<path d="M216.2 39.9L226 56.9H205.7Z" fill="#0b1b7c"/>
<path d="M217.8 40.3H229.9V43.7H219.8Z" fill="#0b1b7c"/>
<path d="M221.6 46.9H229.9V50.3H223.6Z" fill="#0b1b7c"/>
<path d="M225.6 53.8H229.9V56.9H227.4Z" fill="#0b1b7c"/>
</svg>
<svg class="a" style="left:270px;top:42px" width="14" height="14" viewBox="270 42 14 14">
<rect x="271.2" y="43" width="11.6" height="11.8" fill="#a4a4a2"/>
<rect x="273.4" y="43" width="7" height="4.2" fill="#b4b4b2"/><rect x="274" y="50" width="6" height="4.8" fill="#b0b0ae"/><rect x="275" y="51" width="1.6" height="3" fill="#a0a09e"/>
</svg>
<svg class="a" style="left:314px;top:41px" width="14" height="14" viewBox="314 41 14 14">
<path d="M320.6 52.6C325.6 50.4 325.8 44.6 320.4 44.8" fill="none" stroke="#a2a2a0" stroke-width="2"/>
<path d="M316 46.4L321 43V48.8Z" fill="#a2a2a0"/>
</svg>
</div></body></html>
